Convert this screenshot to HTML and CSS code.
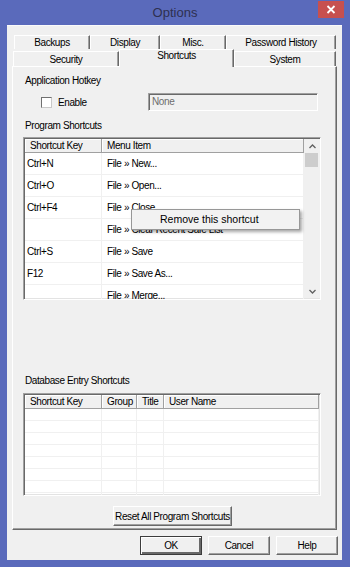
FILE: index.html
```html
<!DOCTYPE html>
<html lang="en">
<head>
    <meta charset="UTF-8">
    <meta name="viewport" content="width=device-width, initial-scale=1.0">
    <title>Options</title>
    <link rel="stylesheet" href="styles.css">
</head>
<body>

    <div class="window">
        <div class="titlebar">
            <span class="title">Options</span>
            <button class="close" type="button">
                <svg width="10" height="9" viewBox="0 0 10 9"><path d="M1.5 1 L8.5 8 M8.5 1 L1.5 8" stroke="#fff" stroke-width="1.8"/></svg>
            </button>
        </div>

        <div class="client">
            <!-- tab strip, two rows -->
            <div class="tabs">
                <div class="tab-row back">
                    <div class="tab w-backups">Backups</div>
                    <div class="tab w-display">Display</div>
                    <div class="tab w-misc">Misc.</div>
                    <div class="tab w-history">Password History</div>
                </div>
                <div class="tab-row front">
                    <div class="tab w-security">Security</div>
                    <div class="tab w-shortcuts selected">Shortcuts</div>
                    <div class="tab w-system">System</div>
                </div>
            </div>

            <div class="panel">
                <div class="group-label">Application Hotkey</div>
                <div class="hotkey-row">
                    <label class="check"><span class="box"></span>Enable</label>
                    <div class="textbox">None</div>
                </div>

                <div class="group-label gap-top">Program Shortcuts</div>
                <div class="listview program">
                    <div class="lv-main">
                        <div class="lv-head">
                            <div class="col c-key">Shortcut Key</div>
                            <div class="col c-menu">Menu Item</div>
                        </div>
                        <div class="lv-row"><div class="col c-key">Ctrl+N</div><div class="col c-menu">File » New...</div></div>
                        <div class="lv-row"><div class="col c-key">Ctrl+O</div><div class="col c-menu">File » Open...</div></div>
                        <div class="lv-row"><div class="col c-key">Ctrl+F4</div><div class="col c-menu">File » Close</div></div>
                        <div class="lv-row"><div class="col c-key"></div><div class="col c-menu">File » Clear Recent Safe List</div></div>
                        <div class="lv-row"><div class="col c-key">Ctrl+S</div><div class="col c-menu">File » Save</div></div>
                        <div class="lv-row"><div class="col c-key">F12</div><div class="col c-menu">File » Save As...</div></div>
                        <div class="lv-row"><div class="col c-key"></div><div class="col c-menu">File » Merge...</div></div>
                    </div>
                    <div class="vscroll">
                        <div class="arrow">
                            <svg width="7" height="5" viewBox="0 0 7 5"><path d="M0.5 4 L3.5 1 L6.5 4" fill="none" stroke="#606060" stroke-width="1.3"/></svg>
                        </div>
                        <div class="thumb"></div>
                        <div class="track"></div>
                        <div class="arrow">
                            <svg width="7" height="5" viewBox="0 0 7 5"><path d="M0.5 1 L3.5 4 L6.5 1" fill="none" stroke="#606060" stroke-width="1.3"/></svg>
                        </div>
                    </div>
                    <!-- right-click menu over the list -->
                    <div class="context-menu">Remove this shortcut</div>
                </div>

                <div class="group-label db-label">Database Entry Shortcuts</div>
                <div class="listview entries">
                    <div class="lv-main">
                        <div class="lv-head">
                            <div class="col c-key">Shortcut Key</div>
                            <div class="col c-group">Group</div>
                            <div class="col c-title">Title</div>
                            <div class="col c-user">User Name</div>
                        </div>
                        <div class="lv-row small"><div class="col c-key"></div><div class="col c-group"></div><div class="col c-title"></div><div class="col c-user"></div></div>
                        <div class="lv-row small"><div class="col c-key"></div><div class="col c-group"></div><div class="col c-title"></div><div class="col c-user"></div></div>
                        <div class="lv-row small"><div class="col c-key"></div><div class="col c-group"></div><div class="col c-title"></div><div class="col c-user"></div></div>
                        <div class="lv-row small"><div class="col c-key"></div><div class="col c-group"></div><div class="col c-title"></div><div class="col c-user"></div></div>
                        <div class="lv-row small"><div class="col c-key"></div><div class="col c-group"></div><div class="col c-title"></div><div class="col c-user"></div></div>
                        <div class="lv-row small"><div class="col c-key"></div><div class="col c-group"></div><div class="col c-title"></div><div class="col c-user"></div></div>
                        <div class="lv-row small"><div class="col c-key"></div><div class="col c-group"></div><div class="col c-title"></div><div class="col c-user"></div></div>
                        <div class="lv-row small"><div class="col c-key"></div><div class="col c-group"></div><div class="col c-title"></div><div class="col c-user"></div></div>
                    </div>
                </div>

                <button class="btn reset" type="button">Reset All Program Shortcuts</button>
            </div>

            <div class="dialog-buttons">
                <button class="btn default" type="button">OK</button>
                <button class="btn" type="button">Cancel</button>
                <button class="btn" type="button">Help</button>
            </div>
        </div>
    </div>

</body>
</html>
```

FILE: styles.css
```css
body {
    margin: 0;
    background-color: #5a6abb;
    font-family: 'Liberation Sans', Arial, sans-serif;
    font-size: 10px;
    letter-spacing: -0.4px;
    color: #000;
}

.window {
    width: 350px;
    height: 567px;
    display: flex;
    flex-direction: column;
}

/* title bar */
.titlebar {
    height: 25px;
    display: grid;
    grid-template-columns: 1fr auto 1fr;
    align-items: start;
}

.title {
    grid-column: 2;
    font-size: 13px;
    letter-spacing: 0;
    line-height: 26px;
    color: #2e3050;
}

.close {
    grid-column: 3;
    justify-self: end;
    width: 26px;
    height: 17px;
    margin: 1px 6px 0 0;
    padding: 0;
    border: none;
    background-color: #c7504f;
    display: flex;
    align-items: center;
    justify-content: center;
}

/* dialog body */
.client {
    flex: 1;
    margin: 0 8px 7px 7px;
    background-color: #f0f0f0;
    border-top: 1px solid #fafafa;
    padding: 9px 5px 0 5px;
}

.tab-row {
    display: flex;
}

.tab-row.back {
    height: 14px;
    margin-left: 2px;
}

.tab-row.front {
    height: 17px;
    margin-left: 1px;
    align-items: flex-end;
}

.tab {
    box-sizing: border-box;
    height: 100%;
    border-top: 1px solid #fff;
    border-left: 1px solid #fff;
    border-right: 1px solid #696969;
    box-shadow: inset -1px 0 #a0a0a0;
    text-align: center;
    line-height: 13px;
    background-color: #f0f0f0;
}

.tab-row.front .tab {
    height: 15px;
    line-height: 15px;
}

.tab-row.front .tab.selected {
    position: relative;
    z-index: 1;
    height: 18px;
    line-height: 12px;
    margin-bottom: -1px;
}

.w-backups { width: 76px; }
.w-display { width: 70px; }
.w-misc { width: 66px; }
.w-history { width: 110px; }
.w-security { width: 106px; }
.w-shortcuts { width: 115px; }
.w-system { width: 102px; }

.panel {
    box-sizing: border-box;
    height: 464px;
    border: 1px solid;
    border-color: #fff #696969 #696969 #fff;
    box-shadow: inset -1px -1px #a0a0a0;
    padding: 7px 0 0 10px;
}

.group-label {
    margin-left: 2px;
    line-height: 13px;
}

.group-label.gap-top {
    margin-top: 8px;
}

.group-label.db-label {
    margin-top: 74px;
}

.hotkey-row {
    width: 298px;
    height: 18px;
    margin-top: 6px;
    display: flex;
    align-items: center;
    justify-content: space-between;
}

.check {
    display: flex;
    align-items: center;
    gap: 6px;
    margin-left: 18px;
}

.box {
    width: 9px;
    height: 9px;
    background-color: #fff;
    border: 1px solid;
    border-color: #707070 #c8c8c8 #c8c8c8 #707070;
}

.textbox {
    box-sizing: border-box;
    width: 170px;
    height: 18px;
    margin-right: 3px;
    padding-left: 3px;
    line-height: 16px;
    color: #6d6d6d;
    border: 1px solid;
    border-color: #a0a0a0 #fff #fff #a0a0a0;
    box-shadow: inset 1px 1px #696969;
}

/* list views */
.listview {
    position: relative;
    box-sizing: border-box;
    width: 298px;
    display: flex;
    background-color: #fff;
    border: 1px solid;
    border-color: #a0a0a0 #fff #fff #a0a0a0;
    box-shadow: inset 1px 1px #696969, inset -1px -1px #e3e3e3;
    padding: 1px 0 0 1px;
}

.listview.program {
    height: 163px;
    margin-top: 5px;
}

.listview.entries {
    height: 103px;
    margin-top: 6px;
    padding-right: 1px;
}

.lv-main {
    flex: 1;
    overflow: hidden;
}

.lv-head {
    display: flex;
    height: 14px;
    background-color: #f0f0f0;
}

.lv-head .col {
    box-sizing: border-box;
    height: 14px;
    line-height: 13px;
    padding-left: 5px;
    border-right: 1px solid #a0a0a0;
    border-bottom: 1px solid #a0a0a0;
    box-shadow: inset 1px 1px #fff;
    white-space: nowrap;
    overflow: hidden;
}

.lv-row {
    display: flex;
    height: 22px;
    border-bottom: 1px solid #f0f0f0;
    box-sizing: border-box;
}

.lv-row .col {
    line-height: 21px;
    padding-left: 2px;
    border-right: 1px solid #f0f0f0;
    box-sizing: border-box;
    white-space: nowrap;
    overflow: hidden;
}

.lv-row .col.c-menu {
    padding-left: 5px;
}

.lv-row.small {
    height: 12px;
}

.c-key { width: 77px; flex: none; }
.c-menu { flex: 1; }
.c-group { width: 35px; flex: none; }
.c-title { width: 27px; flex: none; }
.c-user { flex: 1; }

.vscroll {
    width: 16px;
    display: flex;
    flex-direction: column;
    background-color: #f0f0f0;
    margin-bottom: 1px;
}

.vscroll .arrow {
    height: 14px;
    display: flex;
    align-items: center;
    justify-content: center;
}

.vscroll .thumb {
    height: 14px;
    margin: 0 2px 0 1px;
    background-color: #cdcdcd;
}

.vscroll .track {
    flex: 1;
}

.context-menu {
    position: absolute;
    left: 107px;
    top: 71px;
    box-sizing: border-box;
    width: 169px;
    height: 21px;
    padding-left: 28px;
    font-size: 10.5px;
    letter-spacing: 0;
    line-height: 19px;
    background-color: #f2f2f2;
    border: 1px solid #979797;
    box-shadow: 2px 2px 3px rgba(0, 0, 0, 0.35);
    z-index: 2;
}

/* buttons */
.btn {
    box-sizing: border-box;
    height: 19px;
    padding: 0;
    font-family: inherit;
    font-size: 10px;
    letter-spacing: -0.4px;
    white-space: nowrap;
    color: #000;
    background-color: #f0f0f0;
    border: 1px solid;
    border-color: #fff #696969 #696969 #fff;
    box-shadow: inset -1px -1px #a0a0a0;
}

.btn.reset {
    display: block;
    width: 119px;
    height: 20px;
    margin: 10px 0 0 90px;
}

.dialog-buttons {
    display: flex;
    justify-content: flex-end;
    gap: 6px;
    margin: 6px -1px 0 0;
}

.dialog-buttons .btn {
    width: 62px;
}

.btn.default {
    border-color: #3c3c3c;
    box-shadow: inset 1px 1px #fff, inset -2px -2px #696969;
}
```
